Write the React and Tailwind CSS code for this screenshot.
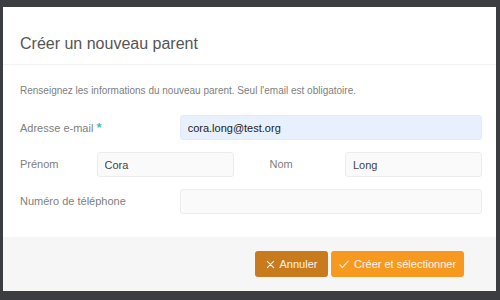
export default function App() {
  const labelCls = 'text-[11px] text-[#808080]';
  const inputCls =
    'h-[25px] rounded-[3px] border border-[#ececec] bg-[#fafafa] px-[7px] text-[11px] text-[#444] outline-none';

  return (
    <div className="h-[300px] w-[500px] bg-[#3c3d41] pl-[3px] pr-[4px] pt-[7px] font-['Liberation_Sans',Arial,sans-serif]">
      <div className="flex h-[284px] flex-col bg-white">
        {/* Header */}
        <div className="flex h-[58px] items-end border-b border-[#f2f2f2] pb-[9px] pl-[17px]">
          <h2 className="text-[16px] font-normal leading-[22px] text-[#555]">Créer un nouveau parent</h2>
        </div>

        {/* Body */}
        <div className="flex-1 pl-[17px] pr-[14px] pt-[19px]">
          <p className="text-[10px] leading-[14px] text-[#808080]">
            Renseignez les informations du nouveau parent. Seul l'email est obligatoire.
          </p>

          <div className="mt-[17px] flex items-center">
            <div className={`${labelCls} w-[160px]`}>
              Adresse e-mail <span className="text-[13px] font-bold text-[#3cc4c0]">*</span>
            </div>
            <input
              readOnly
              value="cora.long@test.org"
              className="h-[25px] w-[303px] rounded-[3px] border border-[#e3ebf8] bg-[#e8f0fe] px-[7px] text-[11px] text-[#222] outline-none"
            />
          </div>

          <div className="mt-[12px] flex items-center">
            <div className={`${labelCls} w-[77px]`}>Prénom</div>
            <input readOnly value="Cora" className={`${inputCls} w-[137px]`} />
            <div className={`${labelCls} w-[112px] pl-[36px]`}>Nom</div>
            <input readOnly value="Long" className={`${inputCls} w-[137px]`} />
          </div>

          <div className="mt-[12px] flex items-center">
            <div className={`${labelCls} w-[160px]`}>Numéro de téléphone</div>
            <input readOnly value="" className={`${inputCls} w-[303px]`} />
          </div>
        </div>

        {/* Footer */}
        <div className="flex h-[54px] items-center justify-end gap-[3px] bg-[#f6f6f6] pr-[32px]">
          <button className="flex h-[26px] w-[73px] items-center justify-center gap-[5px] rounded-[3px] bg-[#c97a1c] text-[11px] text-white/90">
            <svg width="9" height="9" viewBox="0 0 10 10" fill="none" stroke="currentColor" strokeWidth="1.3" strokeLinecap="round">
              <path d="M1.5 1.5l7 7M8.5 1.5l-7 7" />
            </svg>
            Annuler
          </button>
          <button className="flex h-[26px] w-[133px] items-center justify-center gap-[5px] rounded-[3px] bg-[#f7991f] text-[11px] text-white/90">
            <svg width="10" height="9" viewBox="0 0 12 10" fill="none" stroke="currentColor" strokeWidth="1.3" strokeLinecap="round" strokeLinejoin="round">
              <path d="M1 5.5l3 3.2L11 1" />
            </svg>
            Créer et sélectionner
          </button>
        </div>
      </div>
    </div>
  );
}
